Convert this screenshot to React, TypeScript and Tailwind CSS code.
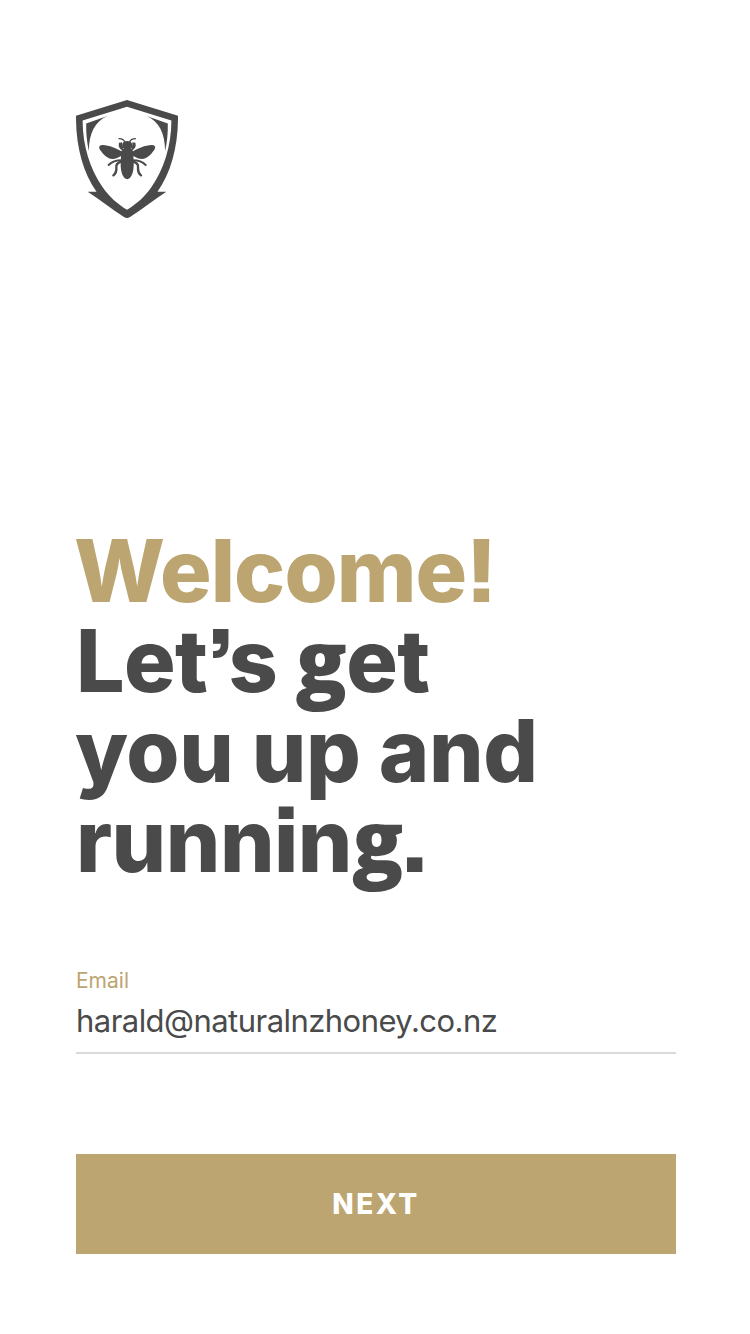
function BeeHalf() {
  return (
    <g>
      <path
        fill="currentColor"
        d="M101 52C92 53 86 58 83 64C70 56 44 44 25 45C16 46 14 53 20 61C29 74 42 87 56 87C67 87 74 82 82 78L81 100C80 122 87 148 101 148Z"
      />
      <g fill="none" stroke="currentColor" strokeLinecap="round">
        <path strokeWidth="4" d="M93 35C90 29 83 26 76 26" />
        <path strokeWidth="5" d="M88 59C80 55 76 49 78 40M86 53C82 49 81 44 83 39" />
        <path strokeWidth="6" d="M83 91C70 91 54 96 45 105" />
        <path strokeWidth="7" d="M83 95C72 98 67 102 68 111C69 124 66 131 59 136" />
      </g>
    </g>
  );
}

function Logo() {
  return (
    <svg className="block h-[118px] w-[102px]" viewBox="0 0 102 118" aria-hidden="true">
      <path
        fill="currentColor"
        fillRule="evenodd"
        d="M51 0L102 15.7C102.3 46 95 73 81.5 91.7H90.3C78 100 66 109 54 117Q51 119 48 117C36 109 24 100 11.7 91.7H20.5C7 73 -.3 46 0 15.7ZM51 6.8L6.6 20.5C6.6 46 14.500 70 26.5 87C33.500 97 42 104.500 51 109.700C60 104.500 68.500 97 75.5 87C87.500 70 95.4 46 95.4 20.5Z"
      />
      <path fill="currentColor" d="M10.2 23.6L31.5 16C19 21.5 13 33 12.9 51C10.8 42 10 33 10.2 23.6Z" />
      <path fill="currentColor" d="M91.8 23.6L70.5 16C83 21.5 89 33 89.1 51C91.2 42 92 33 91.8 23.6Z" />
      <g transform="translate(17.7 30) scale(.3333)">
        <BeeHalf />
        <g transform="translate(201 0) scale(-1 1)">
          <BeeHalf />
        </g>
        <path
          fill="currentColor"
          d="M86 41C88 35 95 33 100.500 33C106 33 113 35 115 41C117 46 115 52 110 57H91C86 52 84 46 86 41Z"
        />
      </g>
    </svg>
  );
}

export default function App() {
  return (
    <main className="flex h-[1334px] w-[750px] flex-col bg-white px-[76px] pt-[100px] font-['Inter',sans-serif] text-[#4a4a4a]">
      <Logo />
      <h1 className="mt-[308px] flex flex-col text-[86px] leading-[90px] font-extrabold whitespace-nowrap [font-feature-settings:'ss07','ss08']">
        <span className="-ml-[2px] tracking-[-0.9px] text-[#bca571]">Welcome!</span>
        <span className="tracking-[-0.6px]">
          Let’s <span className="font-['Open_Sans',sans-serif] text-[85px] leading-none">g</span>et
        </span>
        <span className="-ml-px tracking-[-0.4px]">you up and</span>
        <span className="tracking-[-0.5px]">
          runnin<span className="font-['Open_Sans',sans-serif] text-[85px] leading-none tracking-[-4px]">g</span>.
        </span>
      </h1>
      <form className="mt-[80px] flex w-[600px] flex-col">
        <label className="h-[30px] text-[21px] leading-[30px] text-[#bca571]">Email</label>
        <div className="h-[58px] border-b-2 border-[#dadada] pt-[5px]">
          <span className="block text-[31px] leading-[40px] tracking-[-0.54px]">harald@naturalnzhoney.co.nz</span>
        </div>
        <button
          type="button"
          className="mt-[100px] h-[100px] bg-[#bca571] text-[28px] leading-none font-extrabold tracking-[2.4px] text-white"
        >
          NEXT
        </button>
      </form>
    </main>
  );
}
